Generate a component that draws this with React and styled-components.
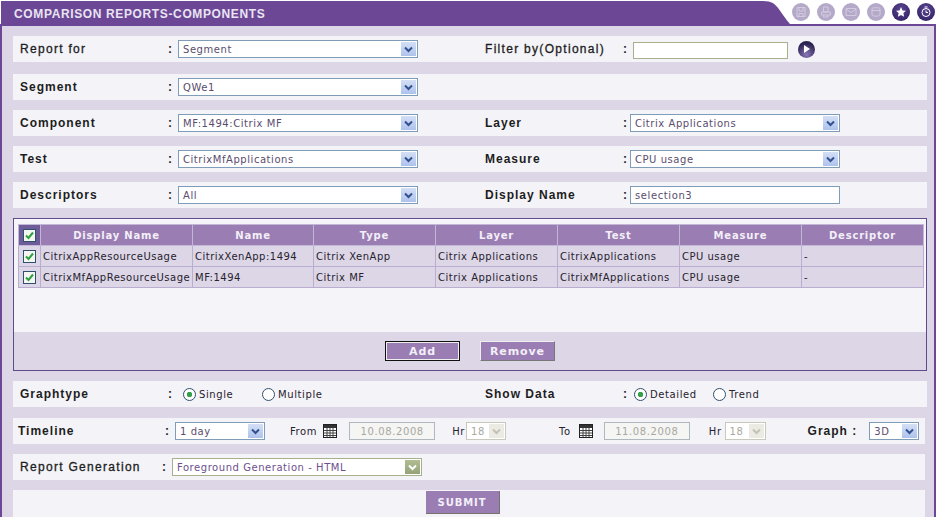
import React from "react";
import styled, { createGlobalStyle, css } from "styled-components";

const GlobalStyle = createGlobalStyle`
  html, body {
    margin: 0;
    padding: 0;
    background: #fff;
  }
  #root {
    width: 942px;
    height: 517px;
    overflow: hidden;
  }
`;

const columns = ["Display Name", "Name", "Type", "Layer", "Test", "Measure", "Descriptor"];
const columnWidths = [22, 152, 121, 122, 122, 122, 122, 122];
const tableRows = [
  ["CitrixAppResourceUsage", "CitrixXenApp:1494", "Citrix XenApp", "Citrix Applications", "CitrixApplications", "CPU usage", "-"],
  ["CitrixMfAppResourceUsage", "MF:1494", "Citrix MF", "Citrix Applications", "CitrixMfApplications", "CPU usage", "-"],
];

const Chevron = ({ color }) => (
  <svg width="9" height="7" viewBox="0 0 9 7">
    <path d="M1 1.5 L4.5 5 L8 1.5" fill="none" stroke={color} strokeWidth="2" />
  </svg>
);

const Select = ({ value, width, variant, ml }) => {
  const chevron = variant === "olive" ? "#fff" : variant === "disabled" ? "#c4c2b4" : "#34518f";
  return (
    <SelectBox $width={width} $variant={variant} $ml={ml}>
      <SelectValue $variant={variant}>{value}</SelectValue>
      <SelectArrow $variant={variant}>
        <Chevron color={chevron} />
      </SelectArrow>
    </SelectBox>
  );
};

const Calendar = ({ ml }) => (
  <CalendarIcon $ml={ml} width="14" height="14" viewBox="0 0 14 14">
    <rect x="0.5" y="0.5" width="13" height="13" fill="#fff" stroke="#222" />
    <rect x="1" y="1" width="12" height="3" fill="#333" />
    <path d="M1 6.5H13M1 9H13M1 11.500H13M4 4V13M7 4V13M10 4V13" stroke="#444" strokeWidth="1" />
  </CalendarIcon>
);

const Check = () => (
  <CheckBox>
    <svg width="9" height="9" viewBox="0 0 9 9">
      <path d="M1 4.500 L3.500 7 L8 1.500" fill="none" stroke="#2f9e3f" strokeWidth="2" />
    </svg>
  </CheckBox>
);

const HeaderIcon = ({ dark, children }) => (
  <IconCircle $dark={dark}>
    <svg width="12" height="12" viewBox="0 0 12 12" fill="none" stroke="currentColor" strokeWidth="1">
      {children}
    </svg>
  </IconCircle>
);

const App = () => {
  return (
    <>
      <GlobalStyle />
      <Frame>
        <TopBar>
          <Title>COMPARISON REPORTS-COMPONENTS</Title>
          <Notch width="27" height="23" viewBox="0 0 27 25" preserveAspectRatio="none">
            <path d="M0 0 C9 0 12 3 16 9 C19 14 23 20 27 25 L0 25 Z" fill="#6b4796" />
          </Notch>
          <IconGroup>
            <HeaderIcon>
              <path d="M2 1.500H10V10.500H2Z M4 1.500V5H8V1.500 M4 10.500V7.500H8V10.500" />
            </HeaderIcon>
            <HeaderIcon>
              <path d="M3.500 1H8V6H3.500Z M1.500 6H10.500V9H1.500Z M3.500 9V11H8V9" />
            </HeaderIcon>
            <HeaderIcon>
              <path d="M1 2.500H11V9.500H1Z M1 3L6 6.500L11 3" />
            </HeaderIcon>
            <HeaderIcon>
              <path d="M2 2.500C2 1.500 10 1.500 10 2.500V9C10 10.500 2 10.500 2 9Z M2 4.500H10" />
            </HeaderIcon>
            <HeaderIcon dark>
              <path d="M6 1L7.500 4.400L11 4.800L8.400 7.100L9.100 10.700L6 8.900L2.900 10.700L3.600 7.100L1 4.800L4.500 4.400Z" fill="#fff" stroke="none" />
            </HeaderIcon>
            <HeaderIcon dark>
              <circle cx="6" cy="6.500" r="4" stroke="#fff" />
              <path d="M6 4.500V6.500H8 M4.500 1H7.500" stroke="#fff" />
            </HeaderIcon>
          </IconGroup>
        </TopBar>

        <Content>
          <Row $mt={10}>
            <Cell>
              <Label $width={148} $regular>Report for</Label>
              <Colon>:</Colon>
              <Select value="Segment" width={240} />
            </Cell>
            <Cell>
              <Label $width={138} $regular>Filter by(Optional)</Label>
              <Colon $width={10}>:</Colon>
              <TextInput $width={155} $olive readOnly value="" />
              <GoButton>
                <svg width="6" height="8" viewBox="0 0 6 8">
                  <path d="M0 0L6 4L0 8Z" fill="#fff" />
                </svg>
              </GoButton>
            </Cell>
          </Row>

          <Row $mt={12}>
            <Cell>
              <Label $width={148}>Segment</Label>
              <Colon>:</Colon>
              <Select value="QWe1" width={240} />
            </Cell>
          </Row>

          <Row>
            <Cell>
              <Label $width={148}>Component</Label>
              <Colon>:</Colon>
              <Select value="MF:1494:Citrix MF" width={240} />
            </Cell>
            <Cell>
              <Label $width={138}>Layer</Label>
              <Colon $width={7}>:</Colon>
              <Select value="Citrix Applications" width={210} />
            </Cell>
          </Row>

          <Row>
            <Cell>
              <Label $width={148}>Test</Label>
              <Colon>:</Colon>
              <Select value="CitrixMfApplications" width={240} />
            </Cell>
            <Cell>
              <Label $width={138}>Measure</Label>
              <Colon $width={7}>:</Colon>
              <Select value="CPU usage" width={210} />
            </Cell>
          </Row>

          <Row>
            <Cell>
              <Label $width={148}>Descriptors</Label>
              <Colon>:</Colon>
              <Select value="All" width={240} />
            </Cell>
            <Cell>
              <Label $width={138}>Display Name</Label>
              <Colon $width={7}>:</Colon>
              <TextInput $width={210} readOnly value="selection3" />
            </Cell>
          </Row>

          <ListBox>
            <ListArea>
              <Table>
                <colgroup>
                  {columnWidths.map((w, i) => (
                    <col key={i} style={{ width: w }} />
                  ))}
                </colgroup>
                <thead>
                  <tr>
                    <CheckHead>
                      <Check />
                    </CheckHead>
                    {columns.map((c) => (
                      <Th key={c}>{c}</Th>
                    ))}
                  </tr>
                </thead>
                <tbody>
                  {tableRows.map((row) => (
                    <tr key={row[0]}>
                      <CheckCell>
                        <Check />
                      </CheckCell>
                      {row.map((v, i) => (
                        <Td key={i}>{v}</Td>
                      ))}
                    </tr>
                  ))}
                </tbody>
              </Table>
            </ListArea>
            <ListActions>
              <ActionButton $focused>Add</ActionButton>
              <ActionButton>Remove</ActionButton>
            </ListActions>
          </ListBox>

          <Row>
            <Cell>
              <Label $width={148}>Graphtype</Label>
              <Colon>:</Colon>
              <RadioGroup $ml={5}>
                <RadioOption $width={79}><Radio $on />Single</RadioOption>
                <RadioOption><Radio />Multiple</RadioOption>
              </RadioGroup>
            </Cell>
            <Cell>
              <Label $width={138}>Show Data</Label>
              <Colon $width={7}>:</Colon>
              <RadioGroup $ml={4}>
                <RadioOption $width={79}><Radio $on />Detailed</RadioOption>
                <RadioOption><Radio />Trend</RadioOption>
              </RadioGroup>
            </Cell>
          </Row>

          <Row $mt={11} $narrow>
            <TimelineLabel>Timeline</TimelineLabel>
            <Colon>:</Colon>
            <Select value="1 day" width={90} />
            <SmallText $ml={25}>From</SmallText>
            <Calendar ml={6} />
            <TextInput $width={86} $disabled $ml={12} readOnly value="10.08.2008" />
            <SmallText $ml={17}>Hr</SmallText>
            <Select value="18" width={40} variant="disabled" ml={1} />
            <SmallText $ml={53}>To</SmallText>
            <Calendar ml={8} />
            <TextInput $width={86} $disabled $ml={11} readOnly value="11.08.2008" />
            <SmallText $ml={19}>Hr</SmallText>
            <Select value="18" width={41} variant="disabled" ml={3} />
            <GraphLabel>Graph :</GraphLabel>
            <Select value="3D" width={50} />
          </Row>

          <Row $narrow>
            <Label $width={142} $regular>Report Generation</Label>
            <Colon>:</Colon>
            <Select value="Foreground Generation - HTML" width={250} variant="olive" />
          </Row>

          <SubmitRow>
            <SubmitButton>SUBMIT</SubmitButton>
          </SubmitRow>
        </Content>
      </Frame>
    </>
  );
};

const sans = `"Liberation Sans", Arial, sans-serif`;
const verdana = `"DejaVu Sans", Verdana, sans-serif`;

const Frame = styled.div`
  width: 936px;
  height: 517px;
  box-sizing: border-box;
  display: flex;
  flex-direction: column;
  overflow: hidden;
`;
const TopBar = styled.div`
  display: flex;
  height: 25px;
  margin-top: 1px;
  flex: none;
  box-sizing: border-box;
  border-bottom: 2px solid #6b4796;
`;
const Title = styled.div`
  width: 762px;
  margin-left: 1px;
  padding-left: 13px;
  box-sizing: border-box;
  background: #6b4796;
  color: #e9e4f1;
  font: bold 12px/26px ${sans};
  letter-spacing: 0.63px;
  height: 23px;
  white-space: nowrap;
`;
const Notch = styled.svg`
  flex: none;
  display: block;
`;
const IconGroup = styled.div`
  display: flex;
  align-items: center;
  gap: 7px;
  margin-left: 2px;
  height: 21px;
`;
const IconCircle = styled.span`
  width: 18px;
  height: 18px;
  border-radius: 50%;
  display: flex;
  align-items: center;
  justify-content: center;
  color: #d2cbdf;
  background: ${(p) => (p.$dark ? "radial-gradient(circle at 50% 35%, #5a4590, #2c1c5e)" : "#b5a9ca")};
`;
const Content = styled.div`
  flex: 1;
  background: #dcd6e6;
  border-left: 2px solid #6b4796;
  border-right: 2px solid #6b4796;
  padding-left: 11px;
  padding-right: 7px;
  min-height: 0;
`;
const Row = styled.div`
  height: 26px;
  margin-top: ${(p) => p.$mt ?? 10}px;
  margin-right: ${(p) => (p.$narrow ? 2 : 0)}px;
  background: #f4f4f8;
  display: flex;
  align-items: center;
  padding-left: 7px;
`;
const Cell = styled.div`
  width: 465px;
  flex: none;
  display: flex;
  align-items: center;
`;
const Label = styled.span`
  width: ${(p) => p.$width}px;
  flex: none;
  font: ${(p) => (p.$regular ? "normal" : "bold")} 12px ${sans};
  letter-spacing: ${(p) => (p.$regular ? 1.3 : 1)}px;
  color: #1d1d22;
  white-space: nowrap;
  ${(p) =>
    p.$regular &&
    css`
      -webkit-text-stroke: 0.3px #1d1d22;
    `}
`;
const TimelineLabel = styled(Label)`
  width: 147px;
  margin-left: -2px;
`;
const GraphLabel = styled(Label)`
  width: auto;
  margin-left: 42px;
  margin-right: 12px;
`;
const Colon = styled.span`
  width: ${(p) => p.$width ?? 10}px;
  flex: none;
  font: bold 12px ${sans};
  color: #1d1d22;
`;
const variantBorder = {
  olive: "#a6b08c",
  disabled: "#c9c8bc",
};
const SelectBox = styled.div`
  width: ${(p) => p.$width}px;
  height: 18px;
  margin-left: ${(p) => p.$ml ?? 0}px;
  flex: none;
  box-sizing: border-box;
  display: flex;
  align-items: center;
  justify-content: space-between;
  background: #fff;
  border: 1px solid ${(p) => variantBorder[p.$variant] ?? "#7f9db9"};
  padding: 1px;
`;
const SelectValue = styled.span`
  padding-left: 3px;
  font: 10px ${verdana};
  letter-spacing: 0.55px;
  white-space: nowrap;
  color: ${(p) =>
    p.$variant === "olive" ? "#6d4f8e" : p.$variant === "disabled" ? "#a8a8a0" : "#5a4d6e"};
`;
const SelectArrow = styled.span`
  width: 15px;
  height: 14px;
  flex: none;
  display: flex;
  align-items: center;
  justify-content: center;
  background: ${(p) =>
    p.$variant === "olive"
      ? "linear-gradient(#b2bd92, #95a277)"
      : p.$variant === "disabled"
      ? "#ecebe3"
      : "linear-gradient(#d3dff5, #aec3ec)"};
`;
const TextInput = styled.input`
  width: ${(p) => p.$width}px;
  height: 18px;
  margin: 0 0 0 ${(p) => p.$ml ?? 0}px;
  box-sizing: border-box;
  flex: none;
  outline: none;
  padding: 0 4px;
  background: #fff;
  font: 10px ${verdana};
  letter-spacing: 0.6px;
  color: #5a4d6e;
  border: 1px solid ${(p) => (p.$olive ? "#a6b08c" : "#7f9db9")};
  ${(p) =>
    p.$olive &&
    css`
      height: 17px;
      margin-top: 3px;
    `}
  ${(p) =>
    p.$disabled &&
    css`
      background: #f5f5f3;
      color: #a8a8a0;
      text-align: center;
      border: 1px solid #b0b8bf;
    `}
`;
const GoButton = styled.span`
  width: 17px;
  height: 17px;
  margin-left: 10px;
  border-radius: 50%;
  flex: none;
  display: flex;
  align-items: center;
  justify-content: center;
  background: radial-gradient(circle at 50% 80%, #8a78b8, #2c2350 70%);
`;
const ListBox = styled.div`
  height: 153px;
  margin-top: 10px;
  box-sizing: border-box;
  border: 1px solid #5f4a8a;
  display: flex;
  flex-direction: column;
`;
const ListArea = styled.div`
  height: 113px;
  flex: none;
  box-sizing: border-box;
  background: #f5f4f8;
  padding: 4px 4px 0;
  border-top: 1px solid #fbf9ff;
`;
const Table = styled.table`
  width: 905px;
  table-layout: fixed;
  border-collapse: collapse;
`;
const Th = styled.th`
  height: 21px;
  padding: 0;
  box-sizing: border-box;
  background: #9a7db3;
  border: 1px solid #c3b6d6;
  color: #f3eff8;
  font: bold 10px ${verdana};
  letter-spacing: 0.8px;
  text-align: center;
`;
const CheckHead = styled(Th)`
  background: #6d5c99;
`;
const Td = styled.td`
  height: 21px;
  padding: 0 0 0 2px;
  box-sizing: border-box;
  background: #dcd6e6;
  border: 1px solid #b9aed0;
  color: #26222e;
  font: 10px ${verdana};
  letter-spacing: 0.5px;
  white-space: nowrap;
  overflow: hidden;
`;
const CheckCell = styled(Td)`
  padding: 0;
`;
const CheckBox = styled.span`
  width: 13px;
  height: 13px;
  margin: 0 auto;
  box-sizing: border-box;
  display: flex;
  align-items: center;
  justify-content: center;
  background: #f3f6f1;
  border: 1px solid #2f4f6f;
`;
const ListActions = styled.div`
  flex: 1;
  display: flex;
  justify-content: center;
  align-items: center;
  gap: 20px;
  box-sizing: border-box;
`;
const ActionButton = styled.button`
  width: 75px;
  height: 20px;
  padding: 0;
  box-sizing: border-box;
  background: #9a7db3;
  color: #f3eff8;
  font: bold 11px ${verdana};
  letter-spacing: 0.9px;
  border: 1px solid;
  border-color: #eee #777 #777 #eee;
  ${(p) =>
    p.$focused &&
    css`
      border: 1px solid #111;
      box-shadow: inset 0 0 0 1px #eee;
    `}
`;
const RadioGroup = styled.div`
  display: flex;
  align-items: center;
  margin-left: ${(p) => p.$ml ?? 0}px;
`;
const RadioOption = styled.label`
  width: ${(p) => (p.$width ? `${p.$width}px` : "auto")};
  display: flex;
  align-items: center;
  gap: 3px;
  font: 10px ${verdana};
  letter-spacing: 0.6px;
  color: #26222e;
`;
const Radio = styled.span`
  width: 13px;
  height: 13px;
  flex: none;
  box-sizing: border-box;
  border-radius: 50%;
  border: 1px solid #2f4f6f;
  background: ${(p) => (p.$on ? "radial-gradient(circle, #35a04a 0 2.5px, #fff 3px)" : "#fff")};
`;
const SmallText = styled.span`
  margin-left: ${(p) => p.$ml ?? 0}px;
  font: 10px ${verdana};
  letter-spacing: 0.6px;
  color: #26222e;
`;
const CalendarIcon = styled.svg`
  flex: none;
  margin-left: ${(p) => p.$ml ?? 5}px;
`;
const SubmitRow = styled.div`
  height: 27px;
  margin-top: 10px;
  margin-right: 2px;
  background: #f4f4f8;
  display: flex;
  justify-content: center;
  padding-top: 1px;
  padding-right: 13px;
  box-sizing: border-box;
`;
const SubmitButton = styled.button`
  width: 74px;
  height: 23px;
  padding: 0;
  background: #9a7db3;
  color: #f3eff8;
  font: bold 10px ${verdana};
  letter-spacing: 0.9px;
  border: none;
  border-right: 1px solid #77736a;
  border-bottom: 1px solid #77736a;
`;

export default App;
